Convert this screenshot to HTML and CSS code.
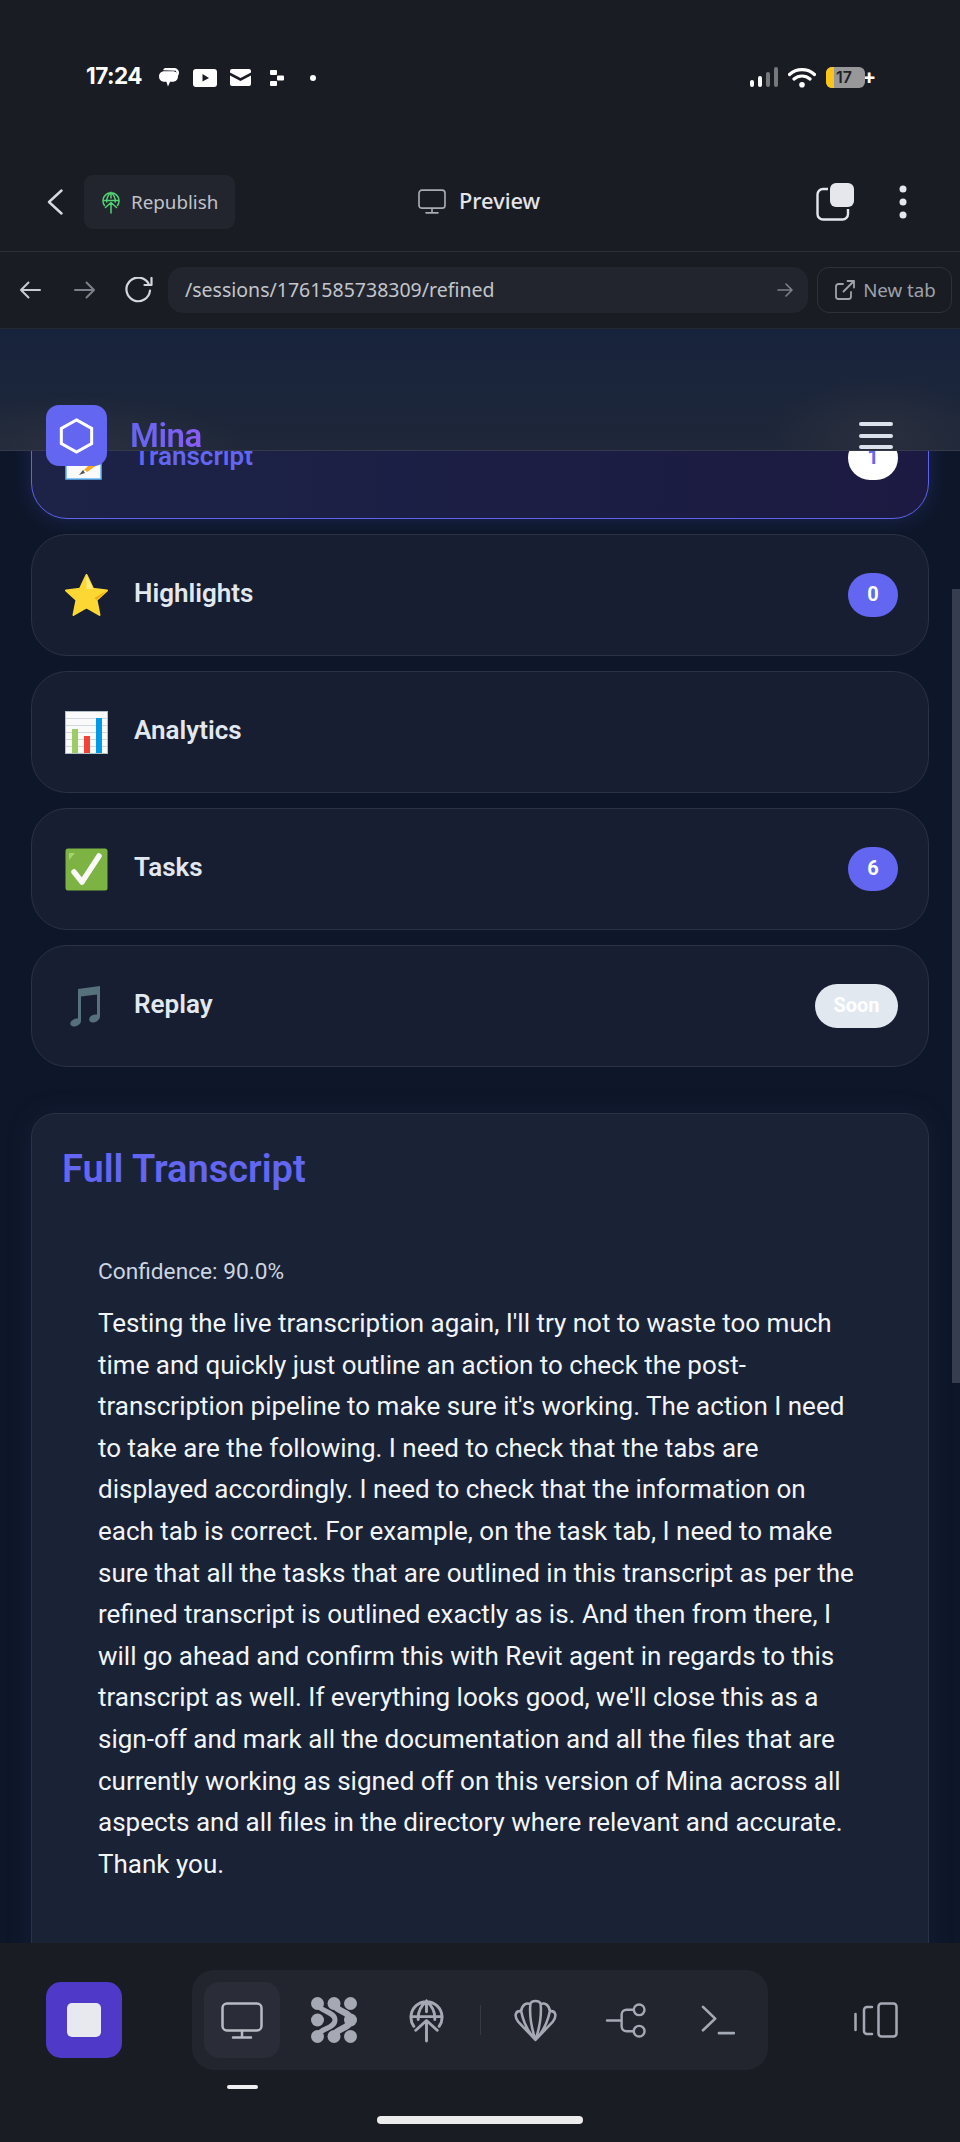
FILE: index.html
```html
<!DOCTYPE html>
<html lang="en">
<head>
<meta charset="utf-8">
<title>Mina – Refined transcript preview</title>
<link rel="stylesheet" href="styles.css">
</head>
<body>
<svg class="defs" width="0" height="0" aria-hidden="true">
  <symbol id="globe-up" viewBox="0 0 36 46">
    <path d="M5 29A16 16 0 1 1 31 29M18 3C11 9 9 15 9.500 22M18 3C25 9 27 15 26.500 22M2.500 19H33.500M18 3V14M18 24V44M7 33L18 23L29 33" fill="none" stroke="currentColor" stroke-width="3" stroke-linecap="round" stroke-linejoin="round"/>
  </symbol>
  <symbol id="monitor" viewBox="0 0 42 37">
    <rect x="1.500" y="1.500" width="39" height="27" rx="4.500" fill="none" stroke="currentColor" stroke-width="2.500"/>
    <path d="M21 29V35.500M12 35.500H30" fill="none" stroke="currentColor" stroke-width="2.500" stroke-linecap="round"/>
  </symbol>
</svg>

<div class="screen">
  <div class="statusbar">
    <div class="status-left">
      <span class="clock">17:24</span>
      <svg class="st-chat" viewBox="0 0 20 20"><path d="M7 1H15C18 1 20 3 20 5.500C20 7 19.500 8 18.500 9L17 3.500L5 3C5 2 6 1 7 1Z" fill="#fff"/><path d="M6 4H14C17 4 19 6 19 9C19 12 17 14 14 14H11.500L9.500 18.500L8 14H6C3 14 1 12 1 9C1 6 3 4 6 4Z" fill="#fff"/></svg>
      <svg class="st-yt" viewBox="0 0 24 18"><path fill-rule="evenodd" d="M3 0H21A3 3 0 0 1 24 3V15A3 3 0 0 1 21 18H3A3 3 0 0 1 0 15V3A3 3 0 0 1 3 0ZM9.500 5V12.500L16 9Z" fill="#fff"/></svg>
      <svg class="st-mail" viewBox="0 0 21 17"><path d="M2 0H19A2 2 0 0 1 21 2V3.500L10.500 9L0 3.500V2A2 2 0 0 1 2 0ZM0 6.500L10.500 12L21 6.500V15A2 2 0 0 1 19 17H2A2 2 0 0 1 0 15Z" fill="#fff"/></svg>
      <svg class="st-squares" viewBox="0 0 14 16"><rect x="0" y="0" width="7" height="5" rx="1" fill="#fff"/><rect x="7" y="5.500" width="7" height="5" rx="1" fill="#fff"/><rect x="0" y="11" width="7" height="5" rx="1" fill="#fff"/></svg>
      <span class="st-dot"></span>
    </div>
    <div class="status-right">
      <svg class="st-signal" viewBox="0 0 28 20"><rect x="0" y="13" width="4" height="7" rx="2" fill="#fff"/><rect x="8" y="9" width="4" height="11" rx="2" fill="#fff"/><rect x="16" y="5" width="4" height="15" rx="2" fill="#77787c"/><rect x="24" y="0" width="4" height="20" rx="2" fill="#77787c"/></svg>
      <svg class="st-wifi" viewBox="0 0 28 21"><path d="M1.500 7.500C8.500 1 19.500 1 26.500 7.500M6 12C10.500 8 17.500 8 22 12" fill="none" stroke="#fff" stroke-width="3.200" stroke-linecap="round"/><circle cx="14" cy="17.800" r="2.800" fill="#fff"/></svg>
      <div class="battery"><span class="battery-level"></span><span class="battery-num">17</span></div>
      <span class="battery-plus">+</span>
    </div>
  </div>

  <div class="appbar">
    <svg class="app-back" viewBox="0 0 16 26"><path d="M14.500 1.500L2 13L14.500 24.500" fill="none" stroke="#d8dade" stroke-width="2.400" stroke-linecap="round" stroke-linejoin="round"/></svg>
    <button class="republish">
      <svg class="republish-icon"><use href="#globe-up"/></svg>
      <span>Republish</span>
    </button>
    <div class="preview-title">
      <svg class="preview-icon"><use href="#monitor"/></svg>
      <span>Preview</span>
    </div>
    <svg class="app-dup" viewBox="0 0 38 38"><path d="M12 6H7A5.500 5.500 0 0 0 1.500 11.500V31A5.500 5.500 0 0 0 7 36.500H26.500A5.500 5.500 0 0 0 32 31V26" fill="none" stroke="#e6e7ec" stroke-width="2.400"/><rect x="14" y="0" width="24" height="24" rx="6" fill="#e6e7ec"/></svg>
    <svg class="app-more" viewBox="0 0 8 34"><circle cx="4" cy="4" r="3.500" fill="#e6e7ec"/><circle cx="4" cy="17" r="3.500" fill="#e6e7ec"/><circle cx="4" cy="30" r="3.500" fill="#e6e7ec"/></svg>
  </div>

  <div class="urlbar">
    <svg class="nav-arrow" viewBox="0 0 22 18"><path d="M21 9H2M9.500 1.500L2 9L9.500 16.500" fill="none" stroke="#c9cbd2" stroke-width="2" stroke-linecap="round" stroke-linejoin="round"/></svg>
    <svg class="nav-arrow nav-forward" viewBox="0 0 22 18"><path d="M1 9H20M12.500 1.500L20 9L12.500 16.500" fill="none" stroke="#7d808a" stroke-width="2" stroke-linecap="round" stroke-linejoin="round"/></svg>
    <svg class="nav-reload" viewBox="0 0 29 26"><path d="M24.500 6.500A11.800 11.800 0 1 0 26 13.500M27.500 1V8H20.500" fill="none" stroke="#d6d7dc" stroke-width="2.200" stroke-linecap="round" stroke-linejoin="round"/></svg>
    <div class="url-field">
      <span class="url-text">/sessions/1761585738309/refined</span>
      <svg class="url-go" viewBox="0 0 16 14"><path d="M1 7H15M9 1L15 7L9 13" fill="none" stroke="#7d808a" stroke-width="1.600" stroke-linecap="round" stroke-linejoin="round"/></svg>
    </div>
    <button class="newtab">
      <svg class="newtab-icon" viewBox="0 0 20 20"><path d="M16 12V16.500A2.500 2.500 0 0 1 13.500 19H3.500A2.500 2.500 0 0 1 1 16.500V6.500A2.500 2.500 0 0 1 3.500 4H8M8.500 11.500L19 1M12.500 1H19V7.500" fill="none" stroke="#a0a3ac" stroke-width="1.800" stroke-linecap="round" stroke-linejoin="round"/></svg>
      <span>New tab</span>
    </button>
  </div>

  <main class="viewport">
    <div class="page">
      <div class="tabs">
        <div class="tab tab-active">
          <svg class="emoji" viewBox="0 0 43 43"><rect x="1" y="1" width="35" height="41" fill="#fafafa" stroke="#64b5f6" stroke-width="1.500"/><path d="M14 38L20 33L22 35L32 28L38 22L34 18L22 30Z" fill="#f5a623"/><path d="M14 38L18 33L20 36Z" fill="#555"/></svg>
          <span class="tab-label">Transcript</span>
          <span class="badge badge-active">1</span>
        </div>
        <div class="tab">
          <svg class="emoji" viewBox="0 0 43 43"><path d="M21.500 1L28 14.800L42 16.500L31.500 26L34.500 41L21.500 33.500L8.500 41L11.500 26L1 16.500L15 14.800Z" fill="#fdd835" stroke="#fdd835" stroke-width="2" stroke-linejoin="round"/><path d="M21.500 1L21.500 15L28 14.800Z" fill="#ffeb7a"/><path d="M42 16.500L31.500 26L29.500 24Z" fill="#f4a90e"/></svg>
          <span class="tab-label">Highlights</span>
          <span class="badge">0</span>
        </div>
        <div class="tab">
          <svg class="emoji" viewBox="0 0 43 43"><rect x="0.500" y="0.500" width="42" height="42" fill="#fafafa" stroke="#b0bec5"/><path d="M1 7.500H42M1 14.500H42M1 21.500H42M1 28.500H42M1 35.500H42" stroke="#cfd8dc" stroke-width="1"/><rect x="7" y="18" width="6" height="24" fill="#9ccc65"/><rect x="19" y="25" width="6" height="17" fill="#f44336"/><rect x="31" y="7" width="6" height="35" fill="#039be5"/></svg>
          <span class="tab-label">Analytics</span>
        </div>
        <div class="tab">
          <svg class="emoji" viewBox="0 0 43 43"><rect x="0.500" y="0.500" width="42" height="42" rx="2.500" fill="#7cb342"/><path d="M4 5H10L4 12Z" fill="#a5d66e"/><path d="M9 24L17 34L34 8" fill="none" stroke="#fafafa" stroke-width="5.500" stroke-linecap="round" stroke-linejoin="round"/></svg>
          <span class="tab-label">Tasks</span>
          <span class="badge">6</span>
        </div>
        <div class="tab">
          <svg class="emoji" viewBox="0 0 43 43"><path d="M13 4L35 1V31C35 35 31 37.500 28 37.500C25 37.500 23.500 35.500 24.500 33C25.500 30.500 28.500 29 32 29.500V9.500L16 11.500V36C16 39 12 41.500 9 41.500C5.500 41.500 4.500 38.500 6 36.500C7.500 34.500 10 33 13 33.500Z" fill="#56707c"/></svg>
          <span class="tab-label">Replay</span>
          <span class="badge badge-soon">Soon</span>
        </div>
      </div>

      <section class="panel">
        <h2 class="panel-title">Full Transcript</h2>
        <div class="transcript">
          <div class="confidence">Confidence: 90.0%</div>
          <p class="transcript-text">Testing the live transcription again, I'll try not to waste too much time and quickly just outline an action to check the post-transcription pipeline to make sure it's working. The action I need to take are the following. I need to check that the tabs are displayed accordingly. I need to check that the information on each tab is correct. For example, on the task tab, I need to make sure that all the tasks that are outlined in this transcript as per the refined transcript is outlined exactly as is. And then from there, I will go ahead and confirm this with Revit agent in regards to this transcript as well. If everything looks good, we'll close this as a sign-off and mark all the documentation and all the files that are currently working as signed off on this version of Mina across all aspects and all files in the directory where relevant and accurate. Thank you.</p>
        </div>
      </section>
    </div>

    <header class="site-header">
      <div class="brand">
        <span class="logo">
          <svg class="logo-mark" viewBox="0 0 36 38"><path d="M18 2L34 11V27L18 36L2 27V11Z" fill="none" stroke="#fff" stroke-width="3.200"/></svg>
        </span>
        <span class="brand-name">Mina</span>
      </div>
      <div class="hamburger"><span></span><span></span><span></span></div>
    </header>
    <div class="scroll-thumb"></div>
  </main>

  <footer class="dock">
    <div class="dock-row">
      <button class="stop"><span class="stop-square"></span></button>
      <nav class="dock-tabs">
        <span class="dock-tab dock-tab-active"><svg class="dock-monitor"><use href="#monitor"/></svg></span>
        <span class="dock-tab">
          <svg class="dock-blob" viewBox="0 0 46 46"><g fill="#a4a9b3"><circle cx="6.500" cy="6.500" r="6.500"/><circle cx="23" cy="6.500" r="6.500"/><circle cx="39.500" cy="6.500" r="6.500"/><circle cx="6.500" cy="23" r="6.500"/><circle cx="39.500" cy="23" r="6.500"/><circle cx="6.500" cy="39.500" r="6.500"/><circle cx="23" cy="39.500" r="6.500"/><circle cx="39.500" cy="39.500" r="6.500"/></g><path d="M23 6.500C24 15 39.500 14 39.500 23C39.500 32 24 31 23 39.500" fill="none" stroke="#a4a9b3" stroke-width="6.500"/><path d="M6.500 6.500C8 15 24 14 24 23C24 32 8 31 6.500 39.500" fill="none" stroke="#a4a9b3" stroke-width="5"/></svg>
        </span>
        <span class="dock-tab">
          <svg class="dock-globe"><use href="#globe-up"/></svg>
        </span>
        <span class="dock-sep"></span>
        <span class="dock-tab">
          <svg class="dock-shell" viewBox="0 0 42 42"><path d="M21 40L4 22C0 17 1 11 7 12C7.500 6 12 3 16 5C17 1 25 1 26 5C30 3 34.500 6 35 12C41 11 42 17 38 22ZM21 40C12 30 8.500 20 7 12M21 40C17 28 15 15 16 5M21 40C25 28 27 15 26 5M21 40C30 30 33.500 20 35 12" fill="none" stroke="#a4a9b3" stroke-width="2.500" stroke-linejoin="round"/></svg>
        </span>
        <span class="dock-tab">
          <svg class="dock-branch" viewBox="0 0 44 38"><path d="M2 19H17M29 8H22A5 5 0 0 0 17 13V25A5 5 0 0 0 22 30H29" fill="none" stroke="#a4a9b3" stroke-width="2.500" stroke-linecap="round"/><circle cx="35" cy="8" r="5.500" fill="none" stroke="#a4a9b3" stroke-width="2.500"/><circle cx="35" cy="30" r="5.500" fill="none" stroke="#a4a9b3" stroke-width="2.500"/></svg>
        </span>
        <span class="dock-tab">
          <svg class="dock-terminal" viewBox="0 0 36 32"><path d="M2 2L15 14.500L2 27M19 30H35" fill="none" stroke="#a4a9b3" stroke-width="2.800" stroke-linecap="round" stroke-linejoin="round"/></svg>
        </span>
      </nav>
      <svg class="panel-toggle" viewBox="0 0 44 36"><path d="M1.500 12V28M18 5H13A3 3 0 0 0 10 8V29A3 3 0 0 0 13 32H18" fill="none" stroke="#a4a9b3" stroke-width="2.500" stroke-linecap="round"/><rect x="24.500" y="1.500" width="18" height="33" rx="3" fill="none" stroke="#a4a9b3" stroke-width="2.500"/></svg>
    </div>
    <span class="dock-indicator"></span>
    <span class="home-bar"></span>
  </footer>
</div>
</body>
</html>
```

FILE: styles.css
```css
* { box-sizing: border-box; }
html, body { margin: 0; padding: 0; background: #1a1c24; }
body { font-family: Roboto, "Liberation Sans", sans-serif; }
button { font: inherit; border: 0; padding: 0; background: none; color: inherit; }
svg { display: block; flex: none; }
.defs { position: absolute; }

.screen { width: 960px; height: 2142px; display: flex; flex-direction: column; overflow: hidden; background: #1a1c24; }

/* status bar */
.statusbar { height: 152px; padding: 64px 84px 0 86px; display: flex; justify-content: space-between; align-items: flex-start; }
.status-left, .status-right { display: flex; align-items: center; height: 24px; }
.status-right { margin-top: 1px; }
.clock { font: 700 22.500px/24px Inter, Roboto, sans-serif; color: #fff; letter-spacing: -0.500px; width: 72px; }
.st-chat { width: 21px; height: 21px; margin: 3px 14px 0 0; }
.st-yt { width: 24px; height: 18px; margin: 3px 13px 0 0; }
.st-mail { width: 21px; height: 17px; margin: 3px 19px 0 0; }
.st-squares { width: 14px; height: 16px; margin: 3px 26px 0 0; }
.st-dot { width: 6px; height: 6px; border-radius: 50%; background: #fff; margin-top: 3px; }
.st-signal { width: 28px; height: 20px; margin-right: 10px; }
.st-wifi { width: 28px; height: 21px; margin-right: 10px; }
.battery { position: relative; width: 39px; height: 21px; border-radius: 6px; background: #98989b; overflow: hidden; }
.battery-level { display: block; width: 8px; height: 100%; background: #fcc419; }
.battery-num { position: absolute; left: 10px; top: 0; font: 600 16px/21px Inter, Roboto, sans-serif; color: #1f2024; }
.battery-plus { width: 14px; margin-left: -3px; font: 700 21px/20px Inter, Roboto, sans-serif; color: #fff; }

/* app bar */
.appbar { height: 100px; padding: 23px 0 0 47px; display: flex; align-items: flex-start; border-bottom: 1px solid #2a2d3a; }
.app-back { width: 16px; height: 26px; margin: 14px 21px 0 0; }
.republish { width: 151px; height: 54px; border-radius: 9px; background: #22252e; display: flex; align-items: center; padding-left: 18px; color: #c0c2c9; font-family: "Noto Sans", sans-serif; font-size: 18.800px; }
.republish-icon { width: 18px; height: 23px; margin-right: 11px; color: #52d273; }
.preview-title { display: flex; align-items: center; height: 52px; margin-left: 183px; font: 500 21.800px/26px "Noto Sans", sans-serif; color: #e4e5ea; width: 398px; }
.preview-icon { width: 28px; height: 25px; margin-right: 13px; color: #a8abb3; }
.app-dup { width: 38px; height: 38px; margin: 8px 45px 0 0; }
.app-more { width: 8px; height: 34px; margin-top: 10px; }

/* url bar */
.urlbar { height: 77px; padding: 15px 8px 0 19px; display: flex; align-items: flex-start; border-bottom: 1px solid #262934; }
.nav-arrow { width: 22px; height: 18px; margin: 14px 33px 0 0; }
.nav-forward { margin-right: 28px; }
.nav-reload { width: 29px; height: 26px; margin: 10px 15px 0 0; }
.url-field { width: 641px; height: 46px; border-radius: 15px; background: #22252e; padding: 0 15px 0 17px; display: flex; align-items: center; justify-content: space-between; color: #c3c5cc; font: 19.500px/24px "Noto Sans", sans-serif; }
.url-go { width: 16px; height: 14px; }
.newtab { width: 135px; height: 46px; margin-left: 9px; border: 1px solid #2e313b; border-radius: 12px; display: flex; align-items: center; padding-left: 17px; color: #9ea1aa; font: 18.700px/24px "Noto Sans", sans-serif; }
.newtab-icon { width: 20px; height: 20px; margin-right: 8px; }

/* viewport */
.viewport { position: relative; flex: 1; min-height: 0; overflow: hidden; background: #0e172a; }
.page { padding: 68px 31px 0; }
.tabs { display: flex; flex-direction: column; gap: 15px; }
.tab { height: 122px; border: 1px solid #2b3244; border-radius: 36px; padding: 0 30px 0 33px; display: flex; align-items: center; background: #181e31; }
.tab-active { border: 1.500px solid #5f63ee; background: linear-gradient(90deg, #1c2347, #1c1a42); box-shadow: 0 0 18px rgba(70, 80, 190, .28); }
.emoji { width: 43px; height: 43px; margin-right: 26px; }
.tab-label { flex: 1; font-size: 26px; line-height: 30px; padding-bottom: 5px; font-weight: 600; color: #e2e8f0; }
.tab-active .tab-label { color: #6366f1; }
.badge { min-width: 50px; height: 44px; padding-bottom: 2px; border-radius: 22px; background: #6366f1; color: #fff; font-weight: 700; font-size: 20px; display: flex; align-items: center; justify-content: center; }
.badge-active { background: #fff; color: #6366f1; }
.badge-soon { width: 83px; background: #e2e8f0; }

.panel { margin-top: 46px; min-height: 900px; padding: 30px 32px 0 30px; border: 1px solid #2b3244; border-radius: 24px; background: #1a2235; box-shadow: 0 0 22px rgba(28, 38, 66, .35); }
.panel-title { margin: 0; font-size: 38px; line-height: 50px; font-weight: 600; color: #6366f1; }
.transcript { padding: 63px 35px 0 36px; }
.confidence { font-size: 22.700px; line-height: 30px; color: #cbd5e1; }
.transcript-text { margin: 16px 0 0; font-size: 26px; line-height: 41.600px; color: #f1f5f9; }

.site-header { position: absolute; left: 0; right: 0; top: 0; height: 122px; padding: 76px 67px 0 46px; border-bottom: 1px solid #343a4b; display: flex; justify-content: space-between; align-items: flex-start;
  background: radial-gradient(110px 60px at 880px 108px, #2a2f3d, transparent), radial-gradient(170px 55px at 80px 122px, #2a303e, transparent), linear-gradient(180deg, #17233c, #1f2739); }
.brand { display: flex; align-items: center; height: 61px; }
.logo { width: 61px; height: 61px; border-radius: 13px; background: #6366f1; display: flex; align-items: center; justify-content: center; margin-right: 23px; }
.logo-mark { width: 35px; height: 36px; }
.brand-name { font-size: 33px; letter-spacing: -0.500px; font-weight: 600; line-height: 40px; background: linear-gradient(90deg, #6366f1, #8b5cf6); -webkit-background-clip: text; background-clip: text; color: transparent; }
.hamburger { width: 34px; height: 61px; display: flex; flex-direction: column; justify-content: center; gap: 7.500px; }
.hamburger span { display: block; height: 4px; border-radius: 2px; background: #dbe2ec; }

.scroll-thumb { position: absolute; right: 0; top: 260px; width: 8px; height: 794px; background: #353d4e; }

/* dock */
.dock { position: relative; height: 199px; background: #1a1c24; }
.dock-row { display: flex; align-items: center; padding: 27px 0 0 46px; }
.stop { width: 76px; height: 76px; border-radius: 15px; background: #4f39c9; display: flex; align-items: center; justify-content: center; margin-right: 70px; }
.stop-square { width: 34px; height: 34px; border-radius: 5px; background: #e8e8ef; }
.dock-tabs { flex: none; width: 576px; height: 100px; border-radius: 22px; background: #22252e; display: flex; align-items: center; padding-left: 12px; }
.dock-tab { flex: none; width: 76px; height: 76px; margin-right: 16px; border-radius: 15px; display: flex; align-items: center; justify-content: center; }
.dock-tab:last-child { margin-right: 0; margin-left: -1px; }
.dock-tab-active { background: #2a2c38; color: #b9bbc4; }
.dock-monitor { width: 42px; height: 37px; }
.dock-globe { width: 35px; height: 45px; color: #a4a9b3; }
.dock-blob { width: 46px; height: 46px; }
.dock-shell { width: 43px; height: 43px; }
.dock-branch { width: 43px; height: 37px; margin-left: -2px; }
.dock-terminal { width: 34px; height: 30px; }
.dock-sep { flex: none; width: 1px; height: 30px; background: #363944; margin-right: 16px; }
.panel-toggle { width: 44px; height: 36px; margin-left: 86px; }
.dock-indicator { display: block; width: 31px; height: 4px; border-radius: 2px; background: #f0f0f3; margin: 15px 0 0 227px; }
.home-bar { display: block; width: 206px; height: 8px; border-radius: 4px; background: #ececec; margin: 27px auto 0; }
```
